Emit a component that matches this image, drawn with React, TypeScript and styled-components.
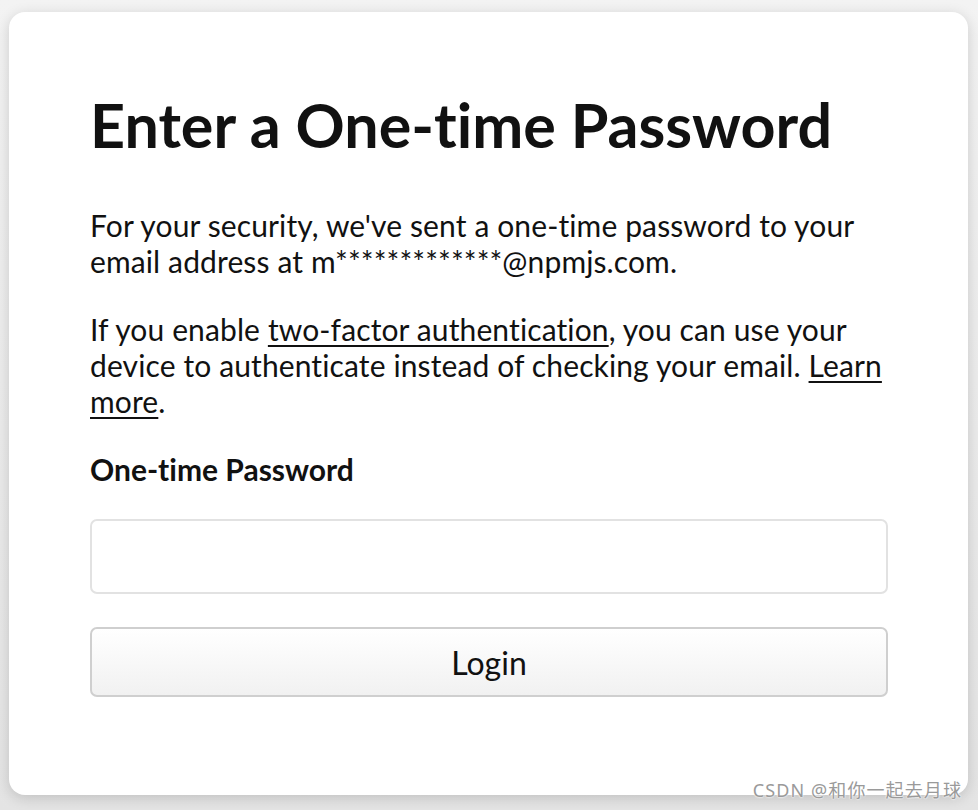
import styled, { createGlobalStyle } from 'styled-components';

const GlobalStyle = createGlobalStyle`
    html, body {
        margin: 0;
        padding: 0;
        background: #ececec;
    }
    body {
        font-family: Lato, 'Noto Sans', sans-serif;
        font-variant-ligatures: none;
        color: #111;
    }
`;

const Page = styled.div`
    width: 978px;
    height: 810px;
    box-sizing: border-box;
    padding: 12px 10px 15px 9px;
    background: linear-gradient(to bottom, #f3f3f3, #e4e4e4);
    position: relative;
    overflow: hidden;
`;

const Card = styled.div`
    height: 100%;
    box-sizing: border-box;
    background: #fff;
    border-radius: 16px;
    box-shadow: 0 3px 14px rgba(0, 0, 0, 0.16);
    padding: 80px 80px 0 81px;
`;

const Title = styled.h1`
    margin: 0 0 49px;
    font-size: 61px;
    font-weight: 700;
    line-height: 66px;
`;

const Text = styled.p`
    margin: 0 0 32px;
    font-size: 30px;
    line-height: 36px;
    letter-spacing: 0.12px;
`;

const Link = styled.a`
    color: inherit;
    text-decoration: underline;
    text-underline-offset: 4px;
    text-decoration-thickness: 2px;
`;

const Label = styled.label`
    display: block;
    font-size: 30px;
    font-weight: 700;
    line-height: 36px;
    margin: 20px 0 32px;
`;

const Input = styled.input`
    display: block;
    width: 100%;
    height: 75px;
    box-sizing: border-box;
    border: 2px solid #e2e2e2;
    border-radius: 7px;
    font-size: 28px;
    padding: 0 16px;
    outline: none;
`;

const Button = styled.button`
    display: block;
    width: 100%;
    height: 70px;
    margin-top: 33px;
    box-sizing: border-box;
    border: 2px solid #cfcfcf;
    border-radius: 7px;
    background: linear-gradient(to bottom, #ffffff, #f1f1f1);
    font-family: Lato, 'Noto Sans', sans-serif;
    font-size: 32px;
    color: #111;
`;

const Watermark = styled.div`
    position: absolute;
    right: 16px;
    bottom: 8px;
    font-family: 'Noto Sans', 'Noto Sans CJK SC', sans-serif;
    font-size: 18px;
    letter-spacing: 1.1px;
    color: #9a9a9a;
    text-shadow: 0 0 2px #fff, 0 0 2px #fff;
`;

export default function App() {
    return (
        <>
            <GlobalStyle />
            <Page>
                <Card>
                    <Title>Enter a One-time Password</Title>
                    <Text>
                        For your security, we've sent a one-time password to
                        your email address at m*************@npmjs.com.
                    </Text>
                    <Text>
                        If you enable <Link href="#">two-factor authentication</Link>,
                        you can use your device to authenticate instead of
                        checking your email. <Link href="#">Learn more</Link>.
                    </Text>
                    <Label htmlFor="otp">One-time Password</Label>
                    <Input id="otp" type="text" />
                    <Button type="button">Login</Button>
                </Card>
                <Watermark>CSDN @和你一起去月球</Watermark>
            </Page>
        </>
    );
}
